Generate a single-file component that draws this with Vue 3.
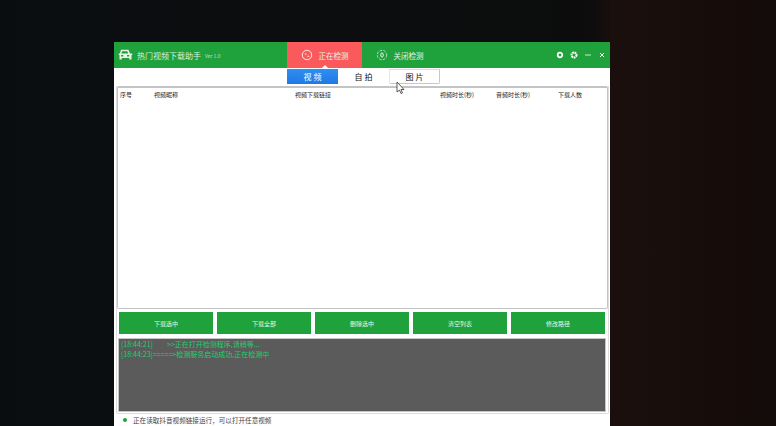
<template>
  <div class="desk">
    <div class="window">
      <header class="title-bar">
        <div class="brand">
          <svg class="logo" viewBox="0 0 20 16" width="15" height="12">
            <path fill="#e6f3e6" d="M4 1h10l2 5h3v2h-1v6h-3v-2H5v2H2V8H1V6h1.500zM5.500 3 4.500 6h9l-1-3zM4 8v2h3V8zm8 0v2h3V8z" fill-rule="evenodd" />
          </svg>
          <span class="app-name">热门视频下载助手</span>
          <span class="version">Ver 1.0</span>
        </div>
        <div class="nav">
          <div class="nav-item active">
            <svg viewBox="0 0 14 14" width="12" height="12"><circle cx="7" cy="7" r="5.500" fill="none" stroke="#fff" /><path d="M4.500 6h2M7.500 8.500h2" stroke="#fff" fill="none" /></svg>
            <span>正在检测</span>
          </div>
          <div class="nav-item">
            <svg viewBox="0 0 14 14" width="12" height="12"><circle cx="7" cy="7" r="5.500" fill="none" stroke="#cfe8cf" stroke-dasharray="3 1.500" /><ellipse cx="7" cy="7" rx="1.500" ry="2.500" fill="none" stroke="#fff" /></svg>
            <span>关闭检测</span>
          </div>
        </div>
        <div class="win-btns">
          <svg viewBox="0 0 8 8" width="8" height="8"><circle cx="4" cy="4" r="2.300" fill="none" stroke="#fff" stroke-width="1.700" /></svg>
          <svg viewBox="0 0 8 8" width="8" height="8"><circle cx="4" cy="4" r="2.500" fill="none" stroke="#fff" stroke-width="2" stroke-dasharray="1.800 .6" /></svg>
          <svg viewBox="0 0 8 8" width="8" height="8"><path d="M1 4h6" stroke="#cfe8cf" /></svg>
          <svg viewBox="0 0 8 8" width="8" height="8"><path d="M2 2l4 4M6 2l-4 4" stroke="#fff" /></svg>
        </div>
      </header>

      <div class="tabs">
        <div v-for="t in tabs" :key="t.name" class="tab" :class="{ on: t.on, outlined: t.outlined }">{{ t.name }}</div>
      </div>

      <div class="frame">
        <div class="table">
          <div class="thead">
            <span v-for="c in columns" :key="c.label" :style="{ width: c.width + 'px' }">{{ c.label }}</span>
          </div>
        </div>

        <div class="actions">
          <button v-for="b in buttons" :key="b">{{ b }}</button>
        </div>

        <div class="log">
          <p v-for="l in logs" :key="l">{{ l }}</p>
        </div>
      </div>

      <footer class="status">
        <i></i>
        <span>正在读取抖音视频链接运行，可以打开任意视频</span>
      </footer>
    </div>
    <svg class="cursor" viewBox="0 0 10 14" width="10" height="14">
      <path d="M1 1v10l2.500-2 1.500 3.500 1.500-.6L5 8.500h3z" fill="#fff" stroke="#333" stroke-width=".8" />
    </svg>
  </div>
</template>

<script setup>
const tabs = [
  { name: '视 频', on: true },
  { name: '自 拍' },
  { name: '图 片', outlined: true }
]

const columns = [
  { label: '序号', width: 34 },
  { label: '视频昵称', width: 141 },
  { label: '视频下载链接', width: 145 },
  { label: '视频时长(秒)', width: 56 },
  { label: '音频时长(秒)', width: 62 },
  { label: '下载人数', width: 40 }
]

const buttons = ['下载选中', '下载全部', '删除选中', '清空列表', '修改路径']

const logs = [
  '[18:44:21]         >>正在打开检测程序,请稍等...',
  '[18:44:23]=====>检测服务启动成功,正在检测中'
]
</script>

<style scoped>
.desk {
  position: relative;
  width: 776px;
  height: 426px;
  overflow: hidden;
  padding: 42px 0 0 114px;
  box-sizing: border-box;
  background: linear-gradient(90deg, #0a0d10 0%, #0c0c0c 76%, #1a0f0c 79%, #140c0a 100%);
  font-family: "Noto Sans CJK SC", "Liberation Sans", sans-serif;
}

.window {
  width: 496px;
  height: 384px;
  background: #fff;
  display: flex;
  flex-direction: column;
}

.title-bar {
  height: 26px;
  flex: none;
  background: #1fa23c;
  display: flex;
  align-items: stretch;
  color: #fff;
}

.brand {
  width: 173px;
  display: flex;
  align-items: center;
  padding-left: 4px;
  box-sizing: border-box;
}

.app-name {
  font-size: 8px;
  margin-left: 4px;
  color: #d8eedc;
}

.version {
  font-size: 5px;
  margin-left: 4px;
  color: #bfe3c6;
}

.nav {
  display: flex;
}

.nav-item {
  width: 75px;
  display: flex;
  align-items: center;
  justify-content: center;
  gap: 6px;
  font-size: 7.500px;
  color: #e4f4e6;
  position: relative;
}

.nav-item.active {
  background: #fb5a5c;
}

.nav-item.active::after {
  content: '';
  position: absolute;
  bottom: 0;
  left: 50%;
  margin-left: -3px;
  border: 3px solid transparent;
  border-top: 0;
  border-bottom-color: #fff;
}

.win-btns {
  margin-left: auto;
  display: flex;
  align-items: center;
  gap: 6px;
  padding-right: 4px;
}

.tabs {
  height: 16px;
  flex: none;
  display: flex;
  padding: 1px 0 0 173px;
  box-sizing: border-box;
}

.tab {
  width: 51px;
  font-size: 8px;
  line-height: 15px;
  text-align: center;
  color: #111;
  box-sizing: border-box;
}

.tab.on {
  background: linear-gradient(180deg, #2f8ff0, #1f78e6);
  color: #fff;
}

.tab.outlined {
  border: 1px solid #c8c8c8;
  border-top-color: #ddd;
  border-left-color: #e6e6e6;
  border-radius: 0 0 2px 2px;
  line-height: 13px;
}

.frame {
  flex: none;
  margin: 2px 1px 0 2px;
  padding-bottom: 1px;
  border: 1px solid #dcdcdc;
  border-top: 0;
  border-radius: 0 0 2px 2px;
}

.table {
  height: 223px;
  border: 1px solid #c4c4c4;
  border-top-width: 2px;
  border-radius: 2px;
  box-sizing: border-box;
}

.thead {
  display: flex;
  padding: 1px 0 0 2px;
  font-size: 6px;
  line-height: 11px;
  color: #222;
}

.actions {
  display: flex;
  gap: 4px;
  padding: 3px 3px 4px 2px;
}

.actions button {
  flex: 1;
  height: 22px;
  border: 0;
  padding: 0;
  background: #1fa23c;
  color: #e8f6ea;
  font: inherit;
  font-size: 6px;
}

.log {
  height: 74px;
  margin: 0 2px 0 1px;
  padding: 0 2px;
  background: #5b5b5b;
  border: 1px solid #c4c4c4;
  box-sizing: border-box;
  color: #1fd06a;
  font-size: 7px;
  line-height: 10px;
}

.log p {
  margin: 0;
  white-space: pre;
}

.status {
  display: flex;
  align-items: center;
  gap: 6px;
  padding: 1px 0 0 9px;
  font-size: 6.600px;
  line-height: 10px;
  color: #444;
}

.status i {
  width: 4px;
  height: 4px;
  border-radius: 50%;
  background: #1fa23c;
}

.cursor {
  position: absolute;
  left: 396px;
  top: 81px;
}
</style>

<style>
html, body {
  margin: 0;
  background: #0a0a0a;
}
</style>
